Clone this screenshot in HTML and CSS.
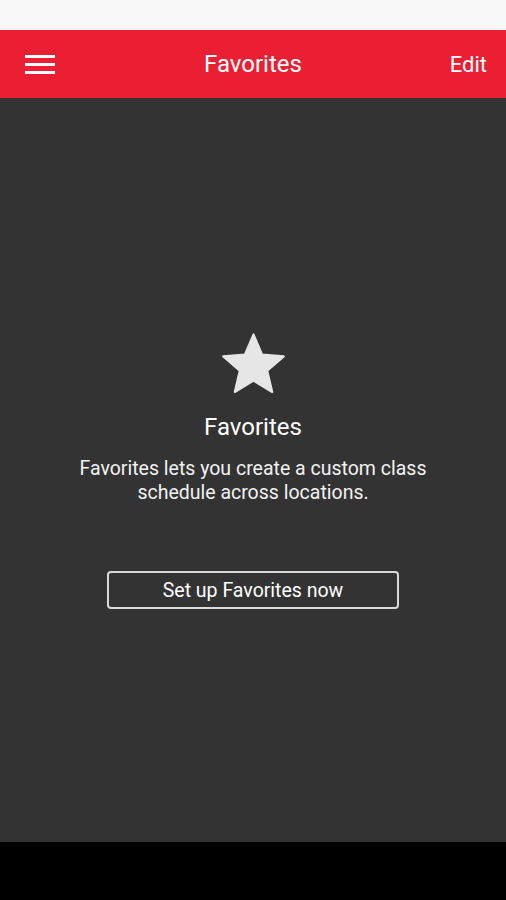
FILE: index.html
```html
<!DOCTYPE html>
<html lang="en">
<head>
  <meta charset="UTF-8" />
  <title>Favorites</title>
  <link rel="stylesheet" href="styles.css">
</head>
<body>
  <div class="screen">
    <div class="status-bar"></div>

    <header class="toolbar">
      <button class="menu-btn" aria-label="Menu">
        <span></span><span></span><span></span>
      </button>
      <h1 class="toolbar-title">Favorites</h1>
      <a class="toolbar-action" href="#">Edit</a>
    </header>

    <main class="empty-state">
      <svg class="star" viewBox="1.6 1.6 20.8 20" width="63" height="61" aria-hidden="true">
        <path d="M12 17.27L18.18 21l-1.64-7.03L22 9.24l-7.19-.61L12 2 9.19 8.63 2 9.24l5.46 4.73L5.82 21z" />
      </svg>
      <h2>Favorites</h2>
      <p>Favorites lets you create a custom class schedule across locations.</p>
      <button class="setup-btn">Set up Favorites now</button>
    </main>

    <div class="nav-bar"></div>
  </div>
</body>
</html>
```

FILE: styles.css
```css
* {
  box-sizing: border-box;
}

body {
  margin: 0;
  font-family: Roboto, "Noto Sans", sans-serif;
  background: #000;
}

.screen {
  width: 506px;
  height: 900px;
  display: flex;
  flex-direction: column;
}

.status-bar {
  height: 30px;
  background: #f8f8f8;
}

.toolbar {
  height: 68px;
  background: #eb1f33;
  display: flex;
  align-items: center;
  justify-content: space-between;
  padding: 0 19px 0 25px;
  color: #fff;
}

.menu-btn {
  width: 30px;
  padding: 0;
  border: none;
  background: none;
  display: flex;
  flex-direction: column;
  gap: 5px;
  cursor: pointer;
}

.menu-btn span {
  display: block;
  height: 3px;
  background: #fff;
}

.toolbar-title {
  margin: 0;
  font-size: 24px;
  font-weight: 400;
  /* keep title centred on the screen, not between the side items */
  position: absolute;
  left: 0;
  right: 0;
  text-align: center;
  pointer-events: none;
}

.toolbar-action {
  color: #fff;
  text-decoration: none;
  font-size: 22px;
}

.empty-state {
  flex: 1;
  background: #333;
  display: flex;
  flex-direction: column;
  align-items: center;
  padding-top: 235px;
  color: #fff;
  text-align: center;
}

.star {
  fill: #e6e6e6;
  stroke: #e6e6e6;
  stroke-width: 0.7;
  stroke-linejoin: round;
  display: block;
}

.empty-state h2 {
  margin: 20px 0 0;
  font-size: 24px;
  font-weight: 400;
  line-height: 26px;
}

.empty-state p {
  margin: 17px 0 0;
  width: 380px;
  font-size: 19.5px;
  line-height: 24px;
  color: #f2f2f2;
}

.setup-btn {
  margin-top: 66px;
  width: 292px;
  height: 38px;
  background: transparent;
  border: 2px solid #d9d9d9;
  border-radius: 4px;
  color: #fff;
  font-family: inherit;
  font-size: 19.5px;
  cursor: pointer;
}

.nav-bar {
  height: 58px;
  background: #000;
}
```
